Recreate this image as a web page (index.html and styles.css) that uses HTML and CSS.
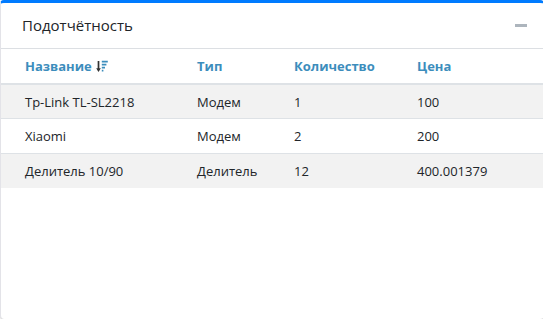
FILE: index.html
```html
<!DOCTYPE html>
<html lang="ru">
<head>
    <meta charset="UTF-8">
    <title>Подотчётность</title>
    <link rel="stylesheet" href="styles.css">
</head>
<body>
    <div class="card">
        <div class="card-header">
            <h3 class="card-title">Подотчётность</h3>
            <button class="btn-tool" title="Свернуть"><span class="minus"></span></button>
        </div>
        <div class="card-body">
            <table class="table">
                <thead>
                    <tr>
                        <th class="col-name">
                            Название
                            <svg class="sort-icon" width="12" height="13" viewBox="0 0 12 13">
                                <path d="M2.5 1v9" stroke="#333" stroke-width="1.7"/>
                                <path d="M0.2 8.3L2.5 12 4.8 8.3z" fill="#333"/>
                                <path d="M5.8 1.6h6M5.8 4.6h4.6M5.8 7.6h3.2M5.8 10.6h1.6" stroke="#3c8dbc" stroke-width="1.7"/>
                            </svg>
                        </th>
                        <th class="col-type">Тип</th>
                        <th class="col-qty">Количество</th>
                        <th>Цена</th>
                    </tr>
                </thead>
                <tbody>
                    <tr>
                        <td>Tp-Link TL-SL2218</td>
                        <td>Модем</td>
                        <td>1</td>
                        <td>100</td>
                    </tr>
                    <tr>
                        <td>Xiaomi</td>
                        <td>Модем</td>
                        <td>2</td>
                        <td>200</td>
                    </tr>
                    <tr>
                        <td>Делитель 10/90</td>
                        <td>Делитель</td>
                        <td>12</td>
                        <td>400.001379</td>
                    </tr>
                </tbody>
            </table>
        </div>
    </div>
</body>
</html>
```

FILE: styles.css
```css
* {
    margin: 0;
    padding: 0;
    box-sizing: border-box;
}

body {
    background: #fff;
    font-family: 'Open Sans', 'Noto Sans', sans-serif;
    font-size: 13px;
    color: #212529;
}

.card {
    width: 544px;
    height: 319px;
    background: #fff;
    border-top: 3px solid #007bff;
    border-left: 1px solid #e3e3e8;
    border-radius: 4px;
    box-shadow: 0 1px 2px rgba(0, 0, 0, 0.2);
}

.card-header {
    display: flex;
    align-items: center;
    justify-content: space-between;
    height: 46px;
    padding: 0 17px 0 21px;
    border-bottom: 1px solid #dcdfe3;
}

.card-title {
    font-size: 15px;
    font-weight: 400;
    color: #212529;
    padding-bottom: 2px;
}

.btn-tool {
    border: none;
    background: transparent;
    width: 12px;
    height: 12px;
    display: flex;
    align-items: center;
}

.btn-tool .minus {
    display: block;
    width: 12px;
    height: 3px;
    background: #adb5bd;
}

.table {
    width: 100%;
    border-collapse: collapse;
}

.table th {
    text-align: left;
    font-weight: 700;
    color: #3c8dbc;
    height: 35px;
    padding: 0;
    border-bottom: 2px solid #dee2e6;
}

.table td {
    height: 34.5px;
    padding: 0;
    border-top: 1px solid #dee2e6;
}

/* first column is indented from the card edge */
.table th:first-child,
.table td:first-child {
    padding-left: 24px;
}

.col-name { width: 196px; }
.col-type { width: 97px; }
.col-qty { width: 123px; }

.sort-icon {
    vertical-align: -2px;
    margin-left: 1px;
}

.table tbody tr:first-child td {
    border-top: none;
}

.table tbody tr:nth-child(odd) {
    background: #f2f2f2;
}
```
